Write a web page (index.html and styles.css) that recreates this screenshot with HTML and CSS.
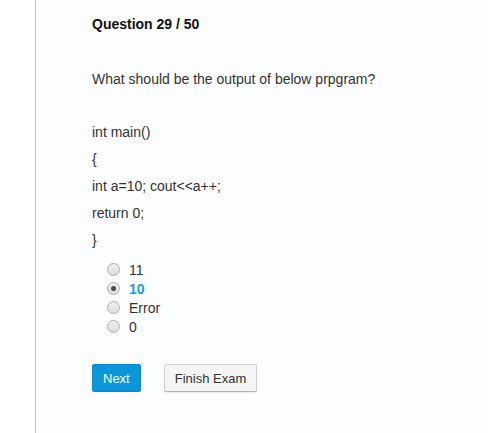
FILE: index.html
```html
<!DOCTYPE html>
<html>
<head>
<meta charset="utf-8">
<link rel="stylesheet" href="styles.css">
</head>
<body>
<div class="page">
  <div class="gutter"></div>
  <main class="main">
    <h1 class="q-title">Question 29 / 50</h1>
    <p class="q-text">What should be the output of below prpgram?</p>
    <div class="code">
      <p>int main()</p>
      <p>{</p>
      <p>int a=10; cout&lt;&lt;a++;</p>
      <p>return 0;</p>
      <p>}</p>
    </div>
    <ul class="options">
      <li class="opt"><span class="radio"></span><span>11</span></li>
      <li class="opt selected"><span class="radio checked"></span><span>10</span></li>
      <li class="opt"><span class="radio"></span><span>Error</span></li>
      <li class="opt"><span class="radio"></span><span>0</span></li>
    </ul>
    <div class="actions">
      <button class="btn btn-primary">Next</button>
      <button class="btn btn-default">Finish Exam</button>
    </div>
  </main>
</div>
</body>
</html>
```
FILE: styles.css
```css
html, body {
  margin: 0;
  padding: 0;
  height: 100%;
}
body {
  font-family: "Liberation Sans", Arial, sans-serif;
  font-size: 14px;
  color: #333;
  background: #fff;
}
.page {
  display: flex;
  min-height: 100%;
}
.gutter {
  width: 35px;
  flex: none;
  background: #fff;
}
.main {
  flex: 1;
  border-left: 1px solid #b3c8da;
  background: #fcfdfe;
  padding: 11px 0 0 56px;
}
.q-title {
  margin: 0;
  font-size: 14px;
  font-weight: bold;
  line-height: 27px;
  color: #111;
}
.q-text {
  margin: 28px 0 0;
  line-height: 27px;
}
.code {
  margin-top: 26px;
}
.code p {
  margin: 0;
  line-height: 27px;
}
.options {
  list-style: none;
  margin: 6px 0 0;
  padding: 0 0 0 15px;
}
.opt {
  display: flex;
  align-items: center;
  height: 19px;
  gap: 9px;
}
.opt.selected {
  color: #1b9be2;
  font-weight: bold;
}
.radio {
  width: 11px;
  height: 11px;
  border-radius: 50%;
  border: 1px solid #b0b0b0;
  background: linear-gradient(#f0f0f0, #dcdcdc);
  box-sizing: content-box;
  position: relative;
  flex: none;
}
.radio.checked::after {
  content: "";
  position: absolute;
  left: 3px;
  top: 3px;
  width: 5px;
  height: 5px;
  border-radius: 50%;
  background: #4a4a4a;
}
.actions {
  margin-top: 28px;
  display: flex;
  gap: 23px;
}
.btn {
  font-family: "Liberation Sans", Arial, sans-serif;
  font-size: 13px;
  height: 28px;
  padding: 0 10px;
  border-radius: 2px;
  cursor: pointer;
}
.btn-primary {
  background: #0a96da;
  border: 1px solid #0a88c8;
  color: #fff;
}
.btn-default {
  background: #f5f5f5;
  border: 1px solid #cfcfcf;
  border-bottom-color: #b5b5b5;
  color: #333;
  box-shadow: 0 1px 1px rgba(0,0,0,0.08);
}
```
